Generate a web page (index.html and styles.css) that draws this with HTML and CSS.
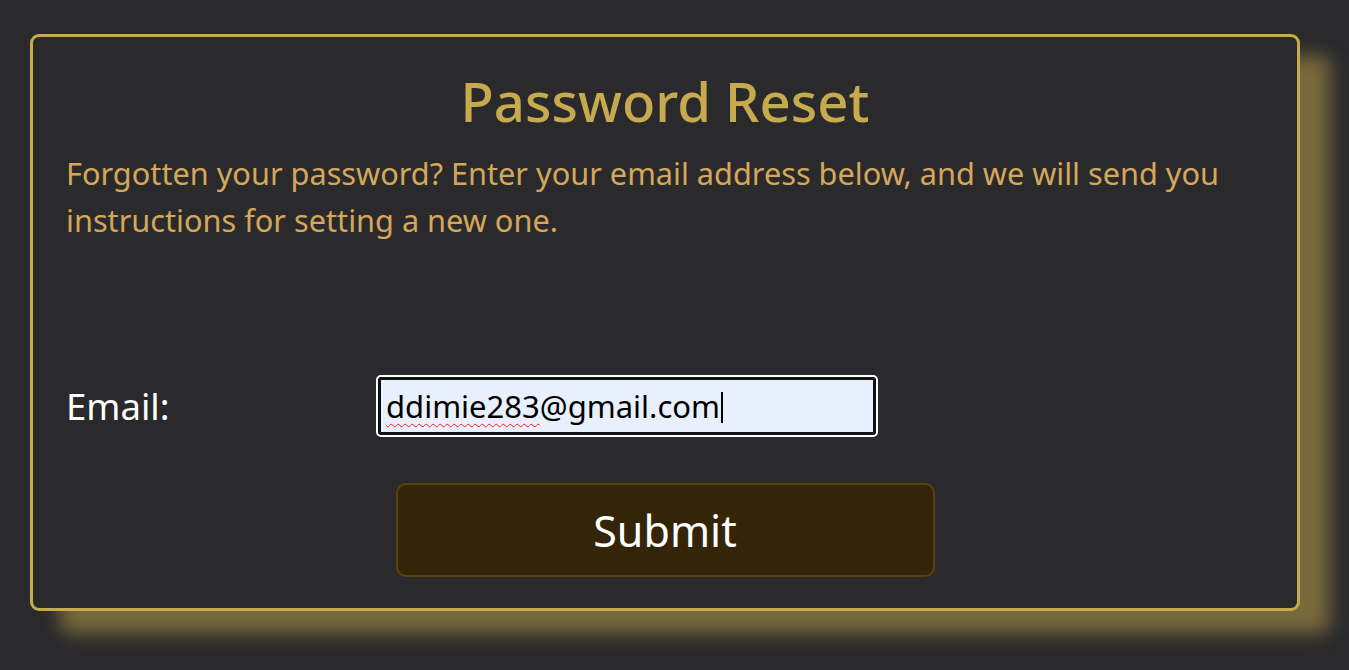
FILE: index.html
```html
<!DOCTYPE html>
<html lang="en">
<head>
<meta charset="utf-8">
<title>Password Reset</title>
<link rel="stylesheet" href="styles.css">
</head>
<body>
<main class="card">
  <h1 class="title">Password Reset</h1>
  <p class="intro">Forgotten your password? Enter your email address below, and we will send you instructions for setting a new one.</p>
  <form class="form">
    <div class="row">
      <label class="label" for="email">Email:</label>
      <div class="field" id="email" role="textbox"><span class="typo">ddimie283</span>@gmail.com<span class="caret"></span></div>
    </div>
    <div class="actions">
      <button type="button" class="submit">Submit</button>
    </div>
  </form>
</main>
</body>
</html>
```

FILE: styles.css
```css
html, body {
  margin: 0;
  padding: 0;
  background: #2a2a2c;
}
body {
  box-sizing: border-box;
  min-height: 670px;
  padding: 34px 49px 0 30px;
  font-family: "Noto Sans", "Open Sans", sans-serif;
}
.card {
  box-sizing: border-box;
  width: 1270px;
  height: 577px;
  border: 3px solid #c6aa4d;
  border-radius: 9px;
  background: #2a2a2c;
  box-shadow: 30px 22px 18px rgba(197, 169, 76, 0.5);
  padding: 0 33px;
}
.title {
  margin: 32px 0 0;
  text-align: center;
  color: #c6aa4d;
  font-size: 54.5px;
  font-weight: 500;
  line-height: 64px;
}
.intro {
  margin: 17px 0 0;
  color: #d5a75b;
  font-size: 30.7px;
  line-height: 47px;
}
.form {
  margin-top: 131px;
}
.row {
  display: flex;
  align-items: center;
}
.label {
  width: 310px;
  color: #ffffff;
  font-size: 36.5px;
}
.field {
  box-sizing: border-box;
  width: 498px;
  height: 58px;
  margin: 2px;
  border: 3px solid #121212;
  border-radius: 3px;
  box-shadow: 0 0 0 2px #ffffff;
  background: #e8f0fe;
  color: #000;
  font-size: 31px;
  line-height: 52px;
  padding-left: 5px;
  white-space: nowrap;
}
.typo {
  text-decoration: underline wavy #ff1a1a;
  text-decoration-thickness: 1px;
  text-underline-offset: 5px;
}
.caret {
  display: inline-block;
  width: 2px;
  height: 31px;
  background: #000;
  vertical-align: -5px;
  margin-left: 1px;
}
.actions {
  display: flex;
  justify-content: center;
  margin-top: 46px;
}
.submit {
  box-sizing: border-box;
  width: 539px;
  height: 94px;
  background: #352508;
  border: 2px solid #5b400f;
  border-radius: 10px;
  color: #ffffff;
  font-family: inherit;
  font-size: 43px;
}
```
